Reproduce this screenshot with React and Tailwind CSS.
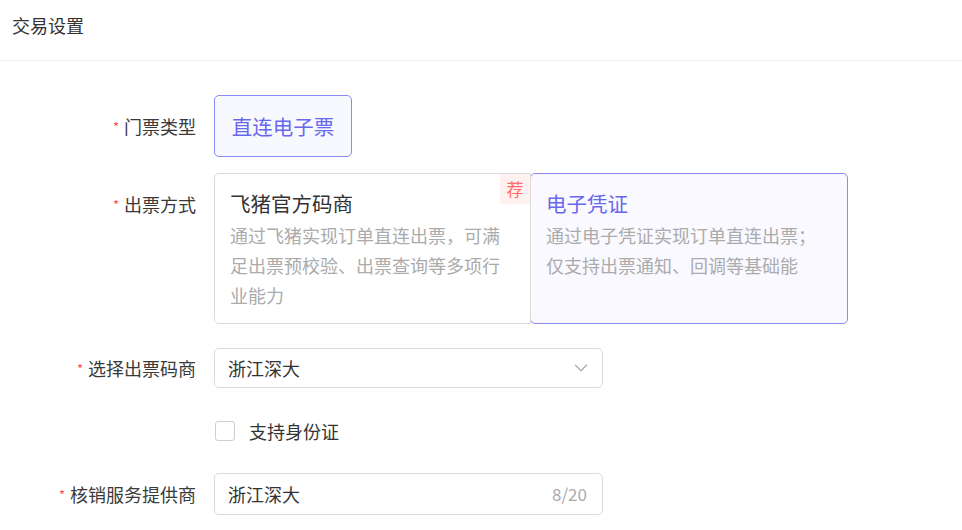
import React from "react";
import { ChevronDown } from "lucide-react";

const FONT = { fontFamily: '"Noto Sans CJK SC", "Noto Sans", sans-serif' };

function Label({ children, className = "" }) {
  return (
    <div
      className={
        "w-[196px] shrink-0 flex items-center justify-end text-[18px] leading-[24px] text-[#3a3a3a] " +
        className
      }
    >
      <span className="text-[13px] mr-[5px] leading-none text-[#ff4d4f]">*</span>
      {children}
    </div>
  );
}

export default function App() {
  return (
    <div className="w-full min-h-screen bg-white" style={FONT}>
      <div className="h-[61px] pt-[13px] pl-[12px] border-b border-[#f0f0f0]">
        <span className="text-[18px] leading-[24px] text-[#333]">交易设置</span>
      </div>

      <div className="pt-[34px]">
        {/* 门票类型 */}
        <div className="flex items-center">
          <Label>门票类型</Label>
          <div className="ml-[18px] w-[138px] h-[62px] flex items-center justify-center rounded-[5px] border border-[#8a8af2] bg-[#f8f8ff] text-[20.5px] text-[#6868ec]">
            直连电子票
          </div>
        </div>

        {/* 出票方式 */}
        <div className="flex items-start mt-[16px]">
          <Label className="mt-[19px]">出票方式</Label>
          <div className="ml-[18px] flex">
            <div className="relative w-[317px] h-[151px] border border-[#dcdcdc] rounded-l-[5px] bg-white px-[15px] pt-[14px]">
              <div className="text-[20.5px] leading-[30px] text-[#333]">飞猪官方码商</div>
              <div className="mt-[2px] text-[18px] leading-[30px] text-[#ababab]">
                通过飞猪实现订单直连出票，可满足出票预校验、出票查询等多项行业能力
              </div>
              <div className="absolute top-0 right-0 w-[30px] h-[30px] flex items-center justify-center bg-[#fff1f0] text-[17px] text-[#ff6b6b]">
                荐
              </div>
            </div>
            <div className="-ml-px w-[318px] h-[151px] border border-[#8a8af2] rounded-[5px] bg-[#f9f9ff] px-[15px] pt-[14px]">
              <div className="text-[20.5px] leading-[30px] text-[#6868ec]">电子凭证</div>
              <div className="mt-[2px] text-[18px] leading-[30px] text-[#ababab]">
                通过电子凭证实现订单直连出票；仅支持出票通知、回调等基础能
              </div>
            </div>
          </div>
        </div>

        {/* 选择出票码商 */}
        <div className="flex items-center mt-[24px]">
          <Label>选择出票码商</Label>
          <div className="ml-[18px] w-[389px] h-[40px] flex items-center justify-between border border-[#dcdcdc] rounded-[5px] pl-[13px] pr-[10px]">
            <span className="text-[18px] text-[#333]">浙江深大</span>
            <ChevronDown size={22} strokeWidth={1.3} className="text-[#a8a8a8]" />
          </div>
        </div>

        {/* 支持身份证 */}
        <div className="flex items-center mt-[31px] pl-[215px]">
          <div className="w-[20px] h-[20px] border border-[#cfcfcf] rounded-[3px] bg-white" />
          <span className="ml-[14px] text-[18px] leading-[24px] text-[#333]">支持身份证</span>
        </div>

        {/* 核销服务提供商 */}
        <div className="flex items-center mt-[30px]">
          <Label>核销服务提供商</Label>
          <div className="ml-[18px] w-[389px] h-[42px] flex items-center justify-between border border-[#dcdcdc] rounded-[5px] pl-[13px] pr-[15px]">
            <span className="text-[18px] text-[#333]">浙江深大</span>
            <span className="text-[17px] text-[#ababab]">8/20</span>
          </div>
        </div>
      </div>
    </div>
  );
}
